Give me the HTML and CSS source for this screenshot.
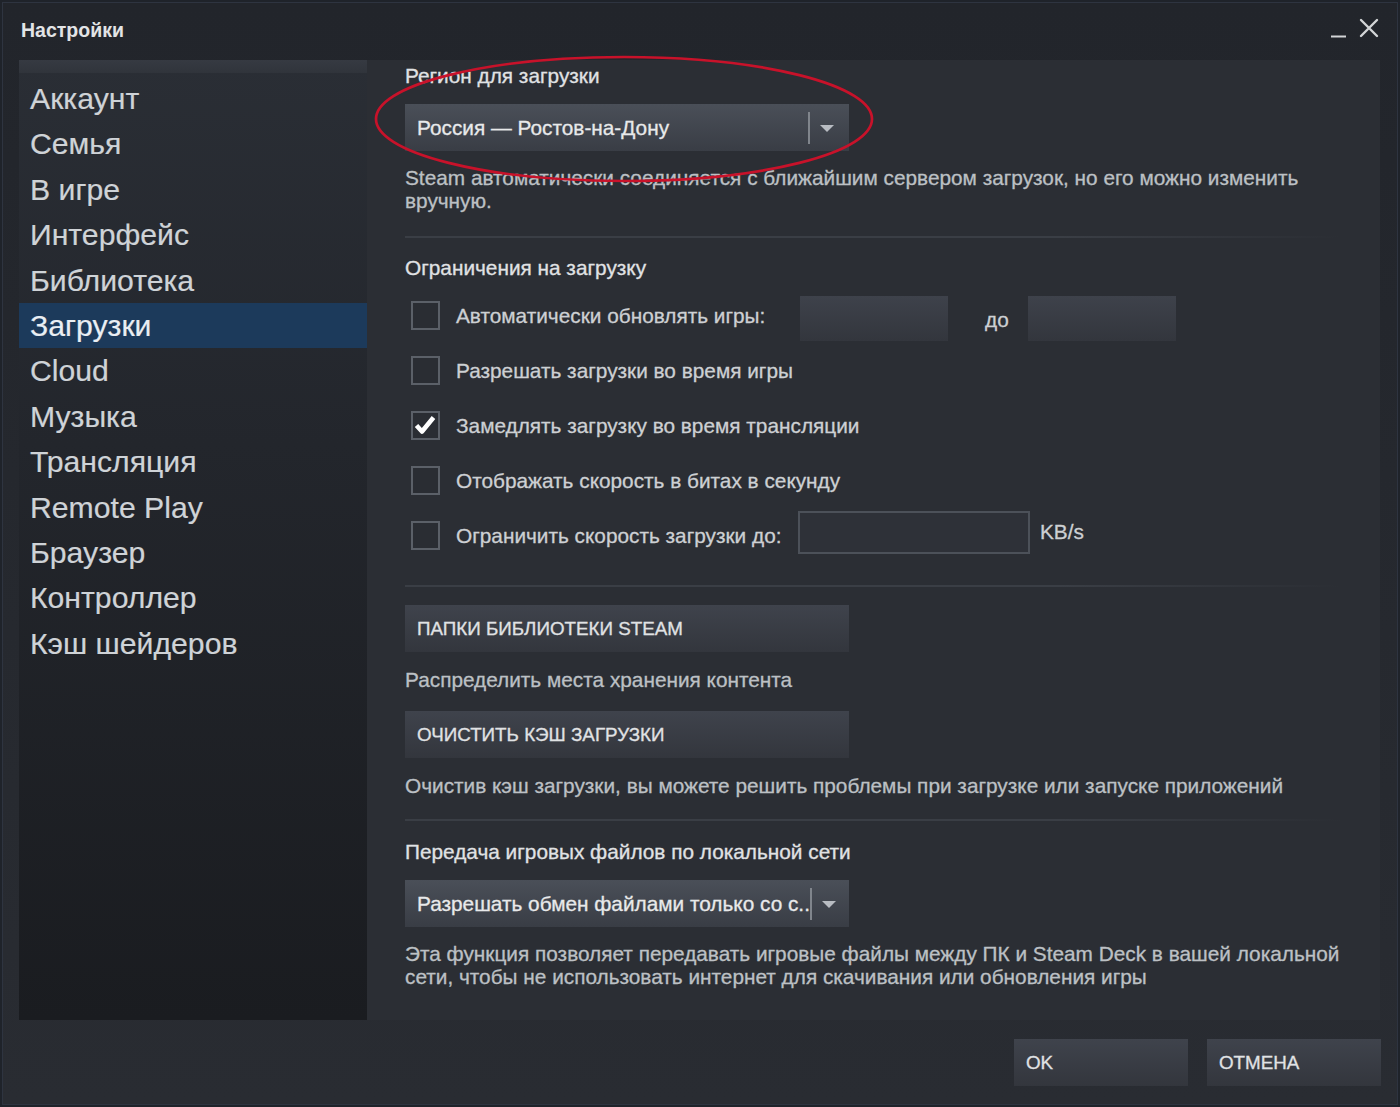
FILE: index.html
```html
<!DOCTYPE html>
<html lang="ru">
<head>
<meta charset="utf-8">
<title>Настройки</title>
<link rel="stylesheet" href="styles.css">
</head>
<body>
<div class="window">
  <header class="titlebar">
    <div class="title">Настройки</div>
    <div class="controls">
      <svg class="ctl-min" width="18" height="20" viewBox="0 0 18 20"><path d="M1 16.5H16" stroke="#d3d5d7" stroke-width="2"/></svg>
      <svg class="ctl-close" width="22" height="22" viewBox="0 0 22 22"><path d="M3 3L19 19M19 3L3 19" stroke="#d3d5d7" stroke-width="2.4" stroke-linecap="round"/></svg>
    </div>
  </header>

  <div class="main">
    <nav class="sidebar">
      <div class="sidebar-top"></div>
      <ul class="menu">
        <li>Аккаунт</li>
        <li>Семья</li>
        <li>В игре</li>
        <li>Интерфейс</li>
        <li>Библиотека</li>
        <li class="active">Загрузки</li>
        <li>Cloud</li>
        <li>Музыка</li>
        <li>Трансляция</li>
        <li>Remote Play</li>
        <li>Браузер</li>
        <li>Контроллер</li>
        <li>Кэш шейдеров</li>
      </ul>
    </nav>

    <section class="content">
      <div class="label">Регион для загрузки</div>
      <div class="dropdown dd-region">
        <span class="dd-text">Россия — Ростов-на-Дону</span>
        <span class="dd-sep"></span>
        <span class="dd-arrow"></span>
        <svg class="ellipse" width="520" height="150" viewBox="0 0 520 150"><ellipse cx="260" cy="75" rx="248" ry="62" fill="none" stroke="#c8122a" stroke-width="2.7"/></svg>
      </div>
      <p class="desc d1">Steam автоматически соединяется с ближайшим сервером загрузок, но его можно изменить вручную.</p>

      <div class="sep s1"></div>

      <div class="label l2">Ограничения на загрузку</div>
      <div class="rows">
        <div class="row">
          <span class="cb"></span>
          <span class="rlabel w1">Автоматически обновлять игры:</span>
          <span class="tbox"></span>
          <span class="to">до</span>
          <span class="tbox"></span>
        </div>
        <div class="row">
          <span class="cb"></span>
          <span class="rlabel">Разрешать загрузки во время игры</span>
        </div>
        <div class="row">
          <span class="cb checked"><svg width="28" height="28" viewBox="0 0 28 28"><path d="M5.5 14.5L11 20.5L22.5 6.5" fill="none" stroke="#ffffff" stroke-width="4.6" stroke-linejoin="round"/></svg></span>
          <span class="rlabel">Замедлять загрузку во время трансляции</span>
        </div>
        <div class="row">
          <span class="cb"></span>
          <span class="rlabel">Отображать скорость в битах в секунду</span>
        </div>
        <div class="row">
          <span class="cb"></span>
          <span class="rlabel w5">Ограничить скорость загрузки до:</span>
          <span class="ibox"></span>
          <span class="unit">KB/s</span>
        </div>
      </div>

      <div class="sep s2"></div>

      <div class="btn wide b1">ПАПКИ БИБЛИОТЕКИ STEAM</div>
      <p class="desc d2">Распределить места хранения контента</p>
      <div class="btn wide b2">ОЧИСТИТЬ КЭШ ЗАГРУЗКИ</div>
      <p class="desc d3">Очистив кэш загрузки, вы можете решить проблемы при загрузке или запуске приложений</p>

      <div class="sep s3"></div>

      <div class="label l3">Передача игровых файлов по локальной сети</div>
      <div class="dropdown dd-lan">
        <span class="dd-text">Разрешать обмен файлами только со с..</span>
        <span class="dd-sep"></span>
        <span class="dd-arrow"></span>
      </div>
      <p class="desc d4">Эта функция позволяет передавать игровые файлы между ПК и Steam Deck в вашей локальной сети, чтобы не использовать интернет для скачивания или обновления игры</p>
    </section>
  </div>

  <footer class="footer">
    <div class="btn fbtn">OK</div>
    <div class="btn fbtn">ОТМЕНА</div>
  </footer>
</div>
</body>
</html>
```

FILE: styles.css
```css
* { box-sizing: border-box; }
html, body { margin: 0; padding: 0; }
body {
  width: 1400px;
  height: 1107px;
  overflow: hidden;
  background: #1d2026;
  font-family: "Liberation Sans", Arial, sans-serif;
}
.window {
  width: 1400px;
  height: 1107px;
  display: flex;
  flex-direction: column;
  background: linear-gradient(#22252b, #292c32);
  border: 2px solid #1f232a;
  box-shadow: inset 0 0 0 1px #2e3440;
}
.titlebar {
  height: 58px;
  flex: none;
  display: flex;
  align-items: flex-start;
  justify-content: space-between;
}
.title {
  margin: 17px 0 0 19px;
  font-size: 19.5px;
  font-weight: bold;
  color: #e2e4e6;
  line-height: 22px;
}
.controls {
  display: flex;
  align-items: flex-start;
  gap: 10px;
  margin: 15px 18px 0 0;
}
.ctl-min { margin-top: 3px; }

.main {
  height: 960px;
  flex: none;
  display: flex;
  margin: 0 18px 0 17px;
}
.sidebar {
  width: 348px;
  flex: none;
  background: linear-gradient(#2a2e35 0%, #23262c 40%, #1a1c20 100%);
}
.sidebar-top {
  height: 13px;
  background: linear-gradient(#363a42, #30343b);
}
.menu {
  list-style: none;
  margin: 0;
  padding: 3px 0 0 0;
}
.menu li {
  height: 45.42px;
  line-height: 45.42px;
  padding-left: 11px;
  font-size: 30.2px;
  color: #cfd3d7;
  -webkit-text-stroke: 0.2px currentColor;
}
.menu li.active {
  background: #1c3a5b;
  color: #e9eef3;
}

.content {
  flex: 1;
  background: #2b2e34;
  padding: 4px 0 0 38px;
}
.label, .desc, .dd-text, .rlabel, .to, .unit {
  font-size: 20.8px;
  -webkit-text-stroke: 0.3px currentColor;
}
.label {
  line-height: 24px;
  color: #e0e2e4;
}
.desc {
  margin: 0;
  line-height: 23px;
  color: #bcc0c4;
  width: 940px;
}
.dropdown {
  position: relative;
  width: 444px;
  height: 47px;
  margin-top: 16px;
  display: flex;
  align-items: center;
  background: linear-gradient(#4a4f58, #393d45);
  padding-left: 12px;
}
.dd-text {
  flex: 1 0 auto;
  color: #e8e9ea;
  white-space: nowrap;
}
.dd-sep {
  width: 2px;
  height: 32px;
  background: #80858c;
  margin-right: 10px;
  flex: none;
}
.dd-arrow {
  flex: none;
  width: 0;
  height: 0;
  border-left: 7px solid transparent;
  border-right: 7px solid transparent;
  border-top: 7px solid #b8bcc2;
  margin-right: 15px;
  margin-top: 2px;
}
.ellipse {
  position: absolute;
  left: -41px;
  top: -60px;
  pointer-events: none;
}
.d1 { margin-top: 15px; }
.d2 { margin-top: 16px; }
.d3 { margin-top: 16px; }
.d4 { margin-top: 15px; }
.sep {
  height: 2px;
  width: 936px;
  background: linear-gradient(90deg, #3a3e45 0%, #3a3e45 70%, rgba(58,62,69,0) 100%);
}
.s1 { margin-top: 24px; }
.s2 { margin-top: 22px; }
.s3 { margin-top: 22px; }
.l2 { margin-top: 18px; }
.l3 { margin-top: 19px; }

.rows { margin-top: 8px; }
.row {
  height: 55px;
  display: flex;
  align-items: center;
}
.cb {
  width: 29px;
  height: 29px;
  flex: none;
  margin-left: 6px;
  margin-right: 16px;
  border: 2px solid #5b6068;
  background: #2a2d33;
  position: relative;
}
.cb svg {
  position: absolute;
  left: -2px;
  top: -2px;
}
.rlabel {
  color: #cdd0d3;
  white-space: nowrap;
}
.w1 { width: 344px; }
.w5 { width: 342px; }
.tbox {
  width: 148px;
  height: 45px;
  background: linear-gradient(#3e424b, #33363d);
  margin-top: 5px;
}
.to {
  color: #cdd0d3;
  margin: 8px 19px 0 37px;
}
.ibox {
  width: 232px;
  height: 43px;
  border: 2px solid #4c5159;
  background: #2e3138;
  margin-top: -7px;
}
.unit {
  color: #cdd0d3;
  margin: -8px 0 0 10px;
}

.btn {
  height: 47px;
  display: flex;
  align-items: center;
  padding-left: 12px;
  background: linear-gradient(#3f434c, #33363d);
  font-size: 18.8px;
  color: #e0e2e4;
  -webkit-text-stroke: 0.3px currentColor;
}
.wide { width: 444px; }
.b1 { margin-top: 18px; }
.b2 { margin-top: 20px; }

.footer {
  flex: 1;
  display: flex;
  justify-content: flex-end;
  align-items: flex-start;
  gap: 19px;
  padding: 19px 17px 0 0;
}
.fbtn { width: 174px; }
```
